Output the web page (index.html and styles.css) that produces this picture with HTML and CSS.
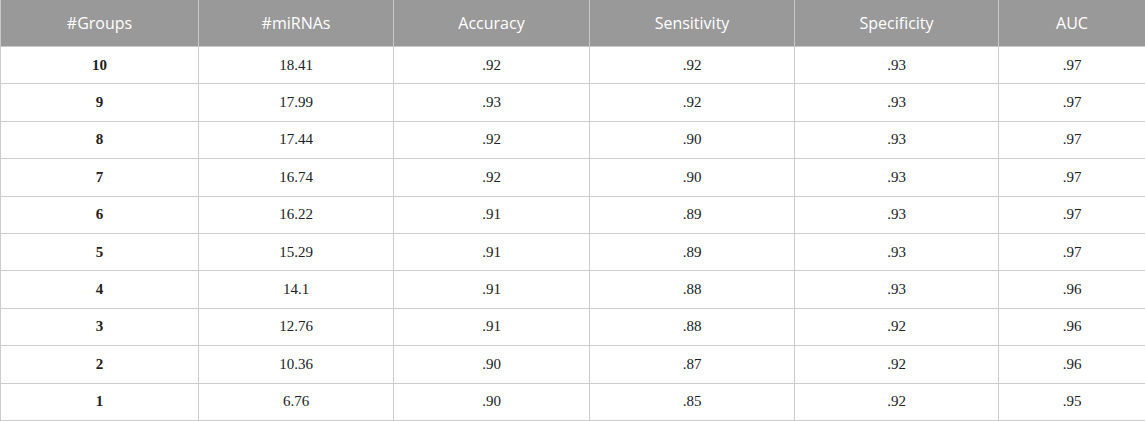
FILE: index.html
```html
<!DOCTYPE html>
<html>
<head>
<meta charset="utf-8">
<link rel="stylesheet" href="styles.css">
</head>
<body>
<table class="data">
  <colgroup>
    <col class="c1"><col class="c2"><col class="c3"><col class="c4"><col class="c5"><col class="c6">
  </colgroup>
  <thead>
    <tr><th>#Groups</th><th>#miRNAs</th><th>Accuracy</th><th>Sensitivity</th><th>Specificity</th><th>AUC</th></tr>
  </thead>
  <tbody>
    <tr><td class="g">10</td><td>18.41</td><td>.92</td><td>.92</td><td>.93</td><td>.97</td></tr>
    <tr><td class="g">9</td><td>17.99</td><td>.93</td><td>.92</td><td>.93</td><td>.97</td></tr>
    <tr><td class="g">8</td><td>17.44</td><td>.92</td><td>.90</td><td>.93</td><td>.97</td></tr>
    <tr><td class="g">7</td><td>16.74</td><td>.92</td><td>.90</td><td>.93</td><td>.97</td></tr>
    <tr><td class="g">6</td><td>16.22</td><td>.91</td><td>.89</td><td>.93</td><td>.97</td></tr>
    <tr><td class="g">5</td><td>15.29</td><td>.91</td><td>.89</td><td>.93</td><td>.97</td></tr>
    <tr><td class="g">4</td><td>14.1</td><td>.91</td><td>.88</td><td>.93</td><td>.96</td></tr>
    <tr><td class="g">3</td><td>12.76</td><td>.91</td><td>.88</td><td>.92</td><td>.96</td></tr>
    <tr><td class="g">2</td><td>10.36</td><td>.90</td><td>.87</td><td>.92</td><td>.96</td></tr>
    <tr><td class="g">1</td><td>6.76</td><td>.90</td><td>.85</td><td>.92</td><td>.95</td></tr>
  </tbody>
</table>
</body>
</html>
```

FILE: styles.css
```css
html, body {
  margin: 0;
  padding: 0;
  background: #ffffff;
}

.data {
  width: 1145px;
  border-collapse: collapse;
  table-layout: fixed;
}

.c1 { width: 198px; }
.c2 { width: 195px; }
.c3 { width: 196px; }
.c4 { width: 205px; }
.c5 { width: 204px; }
.c6 { width: 147px; }

.data th {
  background: #999999;
  color: #ffffff;
  font-family: "Open Sans", "Noto Sans", sans-serif;
  font-weight: 400;
  font-size: 16px;
  height: 46px;
  padding: 0 8px;
  text-align: center;
  vertical-align: middle;
  border: 1px solid #c9c9c9;
  border-top: none;
}

.data td {
  font-family: "Liberation Serif", "Times New Roman", serif;
  font-size: 15px;
  color: #222222;
  text-align: center;
  vertical-align: middle;
  height: 36.4px;
  padding: 0 8px;
  border: 1px solid #cccccc;
}

.data td.g {
  font-weight: bold;
}
```
